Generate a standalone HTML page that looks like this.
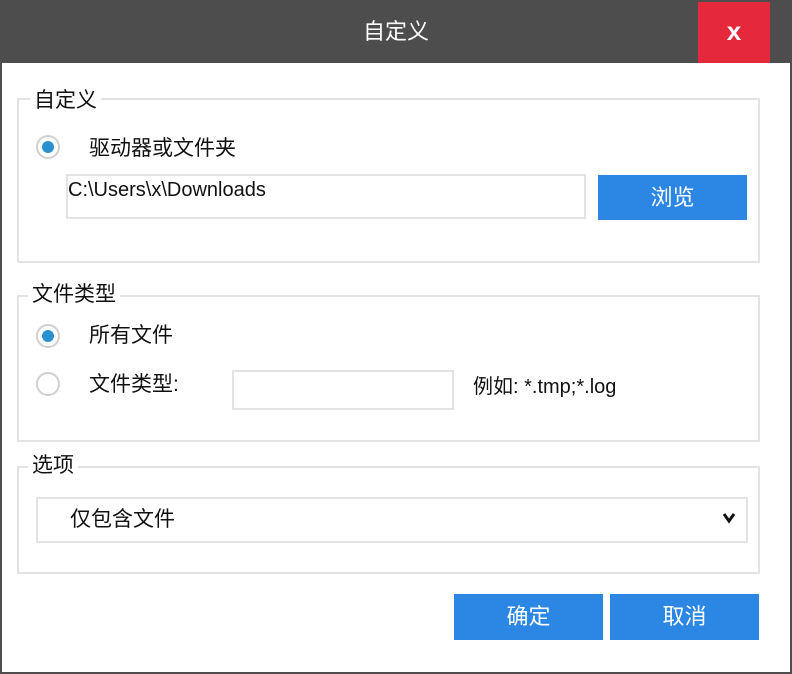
<!DOCTYPE html>
<html><head><meta charset="utf-8"><style>
*{margin:0;padding:0;box-sizing:border-box}
body{width:792px;height:674px;background:#4d4d4d;position:relative;overflow:hidden;font-family:"Liberation Sans","Noto Sans CJK SC",sans-serif;color:#111}
.main{position:absolute;left:2px;top:63px;width:788px;height:609px;background:#fff}
.a{position:absolute}
.title{left:0;top:0;width:792px;height:63px;line-height:63px;text-align:center;color:#fff;font-size:22px}
.close{left:698px;top:2px;width:72px;height:61px;background:#e5293a;color:#fff;font-size:26px;font-weight:bold;text-align:center;line-height:58px}
.box{border:2px solid #e3e3e3}
.lbl{background:#fff;font-size:21px;padding:0 4px;line-height:26px}
.radio{width:24px;height:24px;border-radius:50%;border:2px solid #d0d0d0;background:#fff}
.radio.on::after{content:"";position:absolute;left:4px;top:4px;width:12px;height:12px;border-radius:50%;background:#2a90d0}
.t{font-size:21px;line-height:26px}
.inp{border:2px solid #e3e3e3;background:#fff}
.btn{background:#2b86e4;color:#fff;font-size:22px;text-align:center}
</style></head><body>
<div class="a title">自定义</div>
<div class="a close">x</div>
<div class="main"></div>
<div class="a box" style="left:17px;top:98px;width:743px;height:165px"></div>
<div class="a lbl" style="left:30px;top:88px">自定义</div>
<div class="a radio on" style="left:36px;top:135px"></div>
<div class="a t" style="left:89px;top:136px">驱动器或文件夹</div>
<div class="a inp" style="left:66px;top:174px;width:520px;height:45px"></div>
<div class="a" style="left:68px;top:178px;font-size:20px;line-height:24px">C:\Users\x\Downloads</div>
<div class="a btn" style="left:598px;top:175px;width:149px;height:45px;line-height:45px">浏览</div>
<div class="a box" style="left:17px;top:295px;width:743px;height:147px"></div>
<div class="a lbl" style="left:28px;top:282px">文件类型</div>
<div class="a radio on" style="left:36px;top:324px"></div>
<div class="a t" style="left:89px;top:323px">所有文件</div>
<div class="a radio" style="left:36px;top:372px"></div>
<div class="a t" style="left:89px;top:372px">文件类型:</div>
<div class="a inp" style="left:232px;top:370px;width:222px;height:40px"></div>
<div class="a t" style="left:473px;top:374px;font-size:20px">例如: *.tmp;*.log</div>
<div class="a box" style="left:17px;top:466px;width:743px;height:108px"></div>
<div class="a lbl" style="left:28px;top:453px">选项</div>
<div class="a inp" style="left:36px;top:497px;width:712px;height:46px"></div>
<div class="a t" style="left:70px;top:507px">仅包含文件</div>
<svg class="a" style="left:722px;top:512px" width="14" height="12" viewBox="0 0 14 12"><path d="M2 2 L7 9 L12 2" fill="none" stroke="#111" stroke-width="3"/></svg>
<div class="a btn" style="left:454px;top:594px;width:149px;height:46px;line-height:46px">确定</div>
<div class="a btn" style="left:610px;top:594px;width:149px;height:46px;line-height:46px">取消</div>
</body></html>
